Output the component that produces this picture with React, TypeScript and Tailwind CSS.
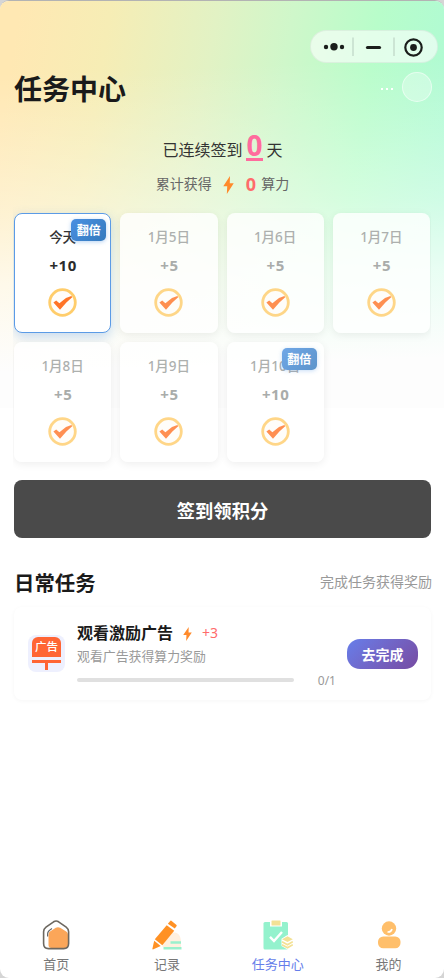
import clsx from "clsx";

type Day = {
  label: string;
  points: number;
  today?: boolean;
  double?: boolean;
};

const days: Day[] = [
  { label: "今天", points: 10, today: true, double: true },
  { label: "1月5日", points: 5 },
  { label: "1月6日", points: 5 },
  { label: "1月7日", points: 5 },
  { label: "1月8日", points: 5 },
  { label: "1月9日", points: 5 },
  { label: "1月10日", points: 10, double: true },
];

function Bolt({ className }: { className?: string }) {
  return (
    <svg viewBox="0 0 12 18" className={className} preserveAspectRatio="none">
      <path d="M7.6 0 0.3 10.2H4.6L4.2 18 11.7 7.2H7.4L7.6 0Z" fill="#ff8a2b" />
    </svg>
  );
}

function CheckCoin() {
  return (
    <svg viewBox="0 0 29 29" className="h-[29px] w-[29px]">
      <circle cx="14.5" cy="14.5" r="12.8" fill="#fffdfa" stroke="#ffcd6b" strokeWidth="2.8" />
      <path
        d="M5.4 14.4 8.2 12.4 11.4 15.2L18 10 23.4 8.1 24.2 9.2 18.4 14.6 12 21.8Z"
        fill="#ff7427"
      />
    </svg>
  );
}

function DayCard({ day }: { day: Day }) {
  return (
    <div
      className={clsx(
        "relative flex h-[120px] flex-col items-center rounded-lg",
        day.today
          ? "border border-[#5b9be6] bg-white shadow-[0_4px_12px_rgba(74,144,226,0.3)]"
          : "bg-white/80 pt-px shadow-[0_2px_8px_rgba(0,0,0,0.07)]"
      )}
    >
      <div
        className={clsx(
          "mt-[13px] h-5 text-[13.5px] leading-5 font-medium whitespace-nowrap",
          day.today ? "text-[#333]" : "text-[#adb0ae]"
        )}
      >
        {day.label}
      </div>
      <div
        className={clsx(
          "mt-2 h-5 pl-px text-[15px] leading-5 font-bold tracking-[0.5px]",
          day.today ? "text-[#2b2b2b]" : "text-[#a9acaa]"
        )}
      >
        +{day.points}
      </div>
      <div className={clsx("mt-[13px]", !day.today && "opacity-80")}>
        <CheckCoin />
      </div>
      {day.double && (
        <span
          className={clsx(
            "absolute flex h-[22px] w-[35px] items-center justify-center rounded-[5px] bg-linear-135 pt-0.5 text-[12px] font-bold text-white",
            day.today
              ? "top-[5px] right-1 from-[#4a90e2] to-[#357abd] shadow-[0_1px_4px_rgba(74,144,226,0.4)]"
              : "top-1.5 right-[7px] from-[#70a7e7] to-[#5d94ca] shadow-[0_1px_4px_rgba(74,144,226,0.3)]"
          )}
        >
          翻倍
        </span>
      )}
    </div>
  );
}

function HomeIcon() {
  return (
    <svg viewBox="0 0 30 30" className="h-[30px] w-[30px]" fill="none">
      <path
        d="M7.5 15.5C7.5 13 8 12 9.8 10.9L14.8 7.8C16.4 6.9 17.6 6.9 19.2 7.8L24.8 11.2C26.4 12.2 27 13.2 27 15V25.5C27 27.3 26 28 24 28H10.5C8.500 28 7.500 27 7.500 25Z"
        fill="#fba659"
      />
      <path
        d="M12.600 1.800 5 7.200C3.200 8.600 2.600 9.700 2.600 11.800V23.500C2.600 27 4.300 28.600 7.500 28.600H22.600C26 28.600 27.600 27 27.600 23.500V11.800C27.600 9.700 27 8.600 25.200 7.200L17.600 1.800C16 0.800 14.200 0.800 12.600 1.800Z"
        stroke="#6d6860"
        strokeWidth="1.6"
      />
      <path d="M6.600 16.500V14C6.600 12 7.200 10.800 11 8.600" stroke="#666" strokeWidth="1.2" />
    </svg>
  );
}

function RecordIcon() {
  return (
    <svg viewBox="0 0 30 30" className="h-[30px] w-[30px]">
      <path d="M10.5 27C11 17 17 12 22.500 12.600C27 13 29 17 29 22V27Z" fill="#fff0df" />
      <path d="M18.500 22.400H29M11.500 28.200H29.500" stroke="#9af0cd" strokeWidth="2.500" />
      <g fill="#ff9124">
        <path d="M14.700 5.200 22.200 10.800 10.300 25.300 2.800 19.300Z" />
        <path d="M15.900 3.700 18.200 0.900Q18.700 0.300 19.400 0.800L24.500 4.900Q25 5.400 24.600 6L22.800 8.400Z" />
        <path d="M2.200 20.800 8.700 26 0.900 29.500Q0.400 29.500 0.400 28.700Z" />
      </g>
    </svg>
  );
}

function TaskIcon() {
  return (
    <svg viewBox="0 0 30 30" className="h-[30px] w-[30px]">
      <rect x="0.500" y="2" width="24.500" height="27.500" rx="1.500" fill="#94f2cd" />
      <path d="M7 0.500H19V6.500H7Z" fill="#fff" />
      <rect x="8.500" y="0.500" width="9" height="5" rx="0.500" fill="#f3e195" />
      <path d="M7 16.800 11 21 19 12" fill="none" stroke="#fff" strokeWidth="2.400" />
      <path d="M18.500 18.700 24.500 15 30 18.700V26L24.500 29.500 18.500 26Z" fill="#fff" />
      <path d="M19 19.200 24.500 16.200 29.800 19.200 24.500 22Z" fill="#f3e195" />
      <path
        d="M19 21.700 24.500 24.700 29.800 21.700M19 24.700 24.500 27.700 29.800 24.700"
        fill="none"
        stroke="#f3e195"
        strokeWidth="1.800"
      />
    </svg>
  );
}

function MineIcon() {
  return (
    <svg viewBox="0 0 30 30" className="h-[30px] w-[30px]">
      <circle cx="15" cy="8.500" r="7.200" fill="#ffbf6b" />
      <rect x="4" y="16.500" width="22.500" height="11.800" rx="5.200" fill="#ffbf6b" />
      <path d="M13.500 12Q17.200 12.300 18 9" fill="none" stroke="#fff" strokeWidth="1.600" />
    </svg>
  );
}

const tabs = [
  { label: "首页", icon: HomeIcon },
  { label: "记录", icon: RecordIcon },
  { label: "任务中心", icon: TaskIcon, active: true },
  { label: "我的", icon: MineIcon },
];

export default function App() {
  return (
    <div className="h-[978px] w-[444px] overflow-hidden bg-[#d5d5d5] font-['Noto_Sans','Noto_Sans_CJK_SC',sans-serif]">
      <div className="relative flex h-full flex-col overflow-hidden rounded-[9px] border-t border-[#b3b3b3] bg-white">
        {/* pastel backdrop, faded out to white towards the bottom */}
        <div className="absolute inset-x-0 top-0 h-[407px] bg-[linear-gradient(99deg,#ffe8b3_4%,#f6edb5_22%,#e2f2c4_43%,#cff7ca_58%,#b8fdca_75%,#aefad5_94%)]">
          <div className="h-full bg-[linear-gradient(178deg,rgba(255,255,255,0)_17%,rgba(255,255,255,0.2)_34%,rgba(255,255,255,0.4)_50%,rgba(255,255,255,0.72)_67%,rgba(253,253,253,1)_88%)]" />
        </div>

        <div className="relative flex h-full flex-col">
          <div className="mt-[29px] mr-[6px] flex h-[33px] w-[128px] items-center self-end rounded-full border border-black/5 bg-white/60">
            <svg viewBox="0 0 126 31" className="h-[31px] w-[126px]" fill="#1a1e1b">
              <circle cx="15" cy="16" r="2.200" />
              <circle cx="23" cy="15.800" r="3.700" />
              <circle cx="31" cy="16" r="2.200" />
              <path d="M42 6.500V25M83 6.500V25" stroke="#c5dccd" strokeWidth="1.500" />
              <path d="M56.500 16.500H68.500" stroke="#1a1e1b" strokeWidth="3.200" strokeLinecap="round" />
              <circle cx="102.500" cy="16.500" r="8.200" fill="none" stroke="#1a1e1b" strokeWidth="2.200" />
              <circle cx="102.500" cy="16.500" r="3.400" />
            </svg>
          </div>

          <div className="mt-[5px] flex h-[42px] items-center justify-between pr-3 pl-3.5">
            <h1 className="text-[28px] leading-[42px] font-bold text-[#1a1a1a]">任务中心</h1>
            <div className="mb-1 flex items-center gap-[9px]">
              <div className="mt-1 flex gap-[3px]">
                <i className="h-0.5 w-0.5 bg-white" />
                <i className="h-0.5 w-0.5 bg-white" />
                <i className="h-0.5 w-0.5 bg-white" />
              </div>
              <div className="h-[30px] w-[30px] rounded-full border border-white/50 bg-white/30" />
            </div>
          </div>

          <div className="mt-[19px] flex h-[34px] items-end justify-center pl-px text-base text-[#333]">
            <span className="leading-[25px]">已连续签到</span>
            <span className="mx-[4px] mb-[2px] h-[30px] border-b-[3px] border-[#ff6b9d] text-[28px] leading-[29px] font-bold text-[#ff6b9d]">
              0
            </span>
            <span className="leading-[25px]">天</span>
          </div>
          <div className="mt-[9px] flex h-6 items-center justify-center pl-px text-sm text-[#666]">
            <span>累计获得</span>
            <Bolt className="mt-0.5 mr-[12px] ml-[11px] h-[18px] w-[11px]" />
            <span className="mr-[5px] text-lg font-bold text-[#ff6b6b]">0</span>
            <span>算力</span>
          </div>

          <div className="mx-[13px] mt-[17px] grid grid-cols-4 gap-[9px] overflow-x-clip pr-px pl-px">
            {days.map((day) => (
              <DayCard key={day.label} day={day} />
            ))}
          </div>

          <button className="mr-[13px] ml-3.5 mt-[18px] h-[58px] shrink-0 rounded-lg bg-[#4a4a4a] pt-1 text-[18.300px] font-bold text-white">
            签到领积分
          </button>

          <div className="mr-3 ml-3.5 mt-[29px] flex h-8 items-center justify-between">
            <h2 className="text-[20.400px] font-bold text-[#1a1a1a]">日常任务</h2>
            <span className="mb-0.5 text-sm text-[#999]">完成任务获得奖励</span>
          </div>

          <div className="mr-[13px] ml-3.5 mt-[8px] flex h-[93px] rounded-lg bg-white pr-[13px] pl-3.5 shadow-[0_1px_4px_rgba(0,0,0,0.04)]">
            <div className="mt-[28px] flex h-[37px] w-[37px] flex-col items-center rounded-lg bg-[#eef0fe] pt-0.5">
              <div className="flex h-5 w-[29px] items-center justify-center rounded-t-[6px] bg-[#ff6534] text-[11.500px] leading-5 font-medium text-white">
                广告
              </div>
              <div className="mt-[3px] h-[2.500px] w-[29px] bg-[#ff6534]" />
              <div className="h-[7px] w-[3px] bg-[#ff6534]" />
            </div>

            <div className="ml-3 w-[259px]">
              <div className="mt-[14px] flex h-6 items-center">
                <span className="text-base font-bold text-[#1a1a1a]">观看激励广告</span>
                <Bolt className="mt-px mr-[10px] ml-[10px] h-[14px] w-[9px]" />
                <span className="text-sm text-[#ff6b6b]">+3</span>
              </div>
              <div className="h-[22px] text-[12.900px] leading-[22px] text-[#999]">观看广告获得算力奖励</div>
              <div className="mt-[3px] flex h-5 items-center justify-between">
                <div className="h-[3.500px] w-[217px] rounded-xs bg-[#e0e0e0]" />
                <span className="mt-[2px] text-xs text-[#999]">0/1</span>
              </div>
            </div>

            <button className="mt-[32px] ml-auto h-[30px] w-[71px] rounded-[13px] bg-linear-135 from-[#667eea] to-[#764ba2] pt-0.5 text-sm font-bold text-white">
              去完成
            </button>
          </div>

          <nav className="mt-auto grid h-[58px] grid-cols-4 pl-px">
            {tabs.map(({ label, icon: Icon, active }) => (
              <div key={label} className="flex flex-col items-center">
                <Icon />
                <span
                  className={clsx(
                    "mt-[4px] text-[13px] leading-5",
                    active ? "text-[#667eea]" : "text-[#777]"
                  )}
                >
                  {label}
                </span>
              </div>
            ))}
          </nav>
        </div>
      </div>
    </div>
  );
}
